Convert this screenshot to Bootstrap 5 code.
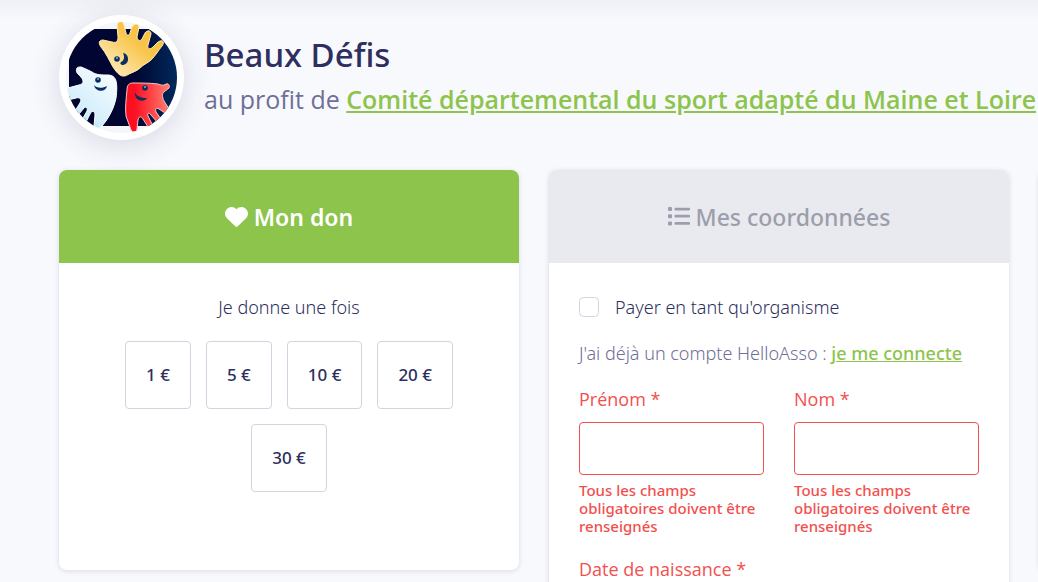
<!DOCTYPE html>
<html lang="fr">
<head>
<meta charset="utf-8">
<meta name="viewport" content="width=device-width, initial-scale=1">
<title>Beaux Défis</title>
<link href="https://cdn.jsdelivr.net/npm/bootstrap@5.3.0/dist/css/bootstrap.min.css" rel="stylesheet">
<style>
  :root { --ink: #2e2f5e; --soft: #6f6f97; --leaf: #8cc44c; --alert: #f2504f; --line: #d1d5e1; }
  body { font: 300 18px/24px "Noto Sans", sans-serif; color: var(--ink); background: #f8f9fd; }
  .page { padding: 15px 29px 0 59px; background: linear-gradient(#eff0f5, #f8f9fd 20px); }
  .masthead { gap: 20px; margin-bottom: 30px; }
  .logo-disc { width: 125px; height: 125px; padding: 7px; background: #fff; box-shadow: 0 5px 30px rgba(46, 47, 94, .16); }
  h1 { font-size: 33px; line-height: 48px; font-weight: 500; }
  .cause { font: 400 25px/40px "Open Sans", sans-serif; color: var(--soft); white-space: nowrap; }
  .leaf-link { color: var(--leaf); font-weight: 500; }
  .cause .leaf-link { font-weight: 600; }
  .leaf-link:hover { color: #6fa634; }
  .steps { --bs-gutter-x: 30px; }
  .step { border: 0; border-radius: 8px; box-shadow: 0 1px 5px rgba(46, 47, 94, .15); }
  .step-head { height: 93px; gap: 6px; border-radius: 8px 8px 0 0; background: #e9eaef; color: #9c9eac; font-size: 23px; line-height: 32px; font-weight: 500; }
  .step-head.current { background: var(--leaf); color: #fff; font-weight: 600; }
  .step-body { padding: 32px 30px; }
  .gift { min-height: 307px; }
  .line-gap { margin-bottom: 22px; }
  .amounts { gap: 15px; padding: 0 28px; }
  .amount { --bs-btn-padding-x: 20px; --bs-btn-padding-y: 21px; --bs-btn-font-size: 17px; --bs-btn-line-height: 24px; --bs-btn-font-weight: 500; --bs-btn-border-radius: 4px; --bs-btn-border-color: var(--line); --bs-btn-color: var(--ink); --bs-btn-hover-border-color: var(--leaf); --bs-btn-hover-color: var(--leaf); }
  .tick { width: 20px; height: 20px; margin: 0; border-color: var(--line); border-radius: 4px; }
  .account { color: var(--soft); }
  .field { color: var(--alert); }
  .field label { font: 400 18px/24px "Open Sans", sans-serif; margin-bottom: 11px; }
  .field .form-control { height: 53px; border-color: var(--alert); border-radius: 4px; }
  .hint { font-size: 15px; line-height: 18px; font-weight: 500; margin-top: 6px; }
</style>
</head>
<body>
<main class="page vh-100 overflow-hidden">
  <header class="masthead d-flex">
    <div class="logo-disc rounded-circle flex-shrink-0">
      <svg class="d-block w-100" viewBox="0 0 111 111" role="img" aria-label="Logo">
        <defs>
          <clipPath id="disc"><circle cx="55.500" cy="55.500" r="55.500"/></clipPath>
          <linearGradient id="night"><stop offset=".6" stop-color="#000531"/><stop offset="1" stop-color="#00295a"/></linearGradient>
          <linearGradient id="gold" y1="1" x2="1" y2="0"><stop stop-color="#fff3d5"/><stop offset=".6" stop-color="#f8c54a"/><stop offset="1" stop-color="#f9bd35"/></linearGradient>
          <linearGradient id="ice" x1="0" y1="1" x2=".7" y2="0"><stop stop-color="#80d4f4"/><stop offset=".4" stop-color="#d4effb"/><stop offset="1" stop-color="#f4fbff"/></linearGradient>
          <linearGradient id="fire"><stop offset=".2" stop-color="#fb1022"/><stop offset=".9" stop-color="#ff766b"/></linearGradient>
        </defs>
        <g clip-path="url(#disc)">
          <path fill="#f4f6fa" d="M0 0h111v111H0z"/>
          <path fill="url(#night)" d="M3 7h108v97H3z"/>
          <g stroke-linejoin="round">
            <path stroke="#ffe9b5" fill="url(#gold)" d="M37 18c-4 0-5 3-2 7 5 6 8 13 12 20 2 3 4 6 7 8s6 1 9-1c4-2 8-3 11-6 4-4 8-5 11-8 5-5 7-9 11-14 3-4 1-7-4-4l-5 5c-3 3-6 2-5-2l3-11c0-4-4-4-6-1l-3 6c-2 3-5 1-5-2l2-10c0-4-5-4-7 0l-2 6c-1 3-3 3-4 0l-2-8c-1-5-6-5-7 1l1 11c0 5-2 6-6 5z"/>
            <path stroke="#fff" fill="url(#ice)" d="M11 46c-2 4 1 6 4 9 3 4 3 7-2 8L-2 67v12l12-3c4-1 6 1 4 5l-5 8c-2 4 1 6 4 3l5-6c2-2 4 0 3 3l-5 9c-2 4 2 5 4 2l4-8c2-4 5-3 5 1l-1 11c1 4 5 3 8 0 7-8 12-18 14-28 1-8 1-13 0-17-1-4-4-6-8-6-6 0-12 0-16-3-4-2-8-4-11-5-2 0-3 0-4 1z"/>
            <path stroke="#ffc2c5" fill="url(#fire)" d="M67 61c-4 0-6 2-6 7-1 10-2 18-1 26l5 14c2 3 6 2 6-1l1-9c1-4 3-4 5-1l5 8c3 2 6 0 4-3l-4-8c-1-3 1-4 3-1l7 8c3 2 5-1 3-4l-5-7c-1-3 0-5 3-3l9 6c3 1 4-1 3-3l-7-11c-2-4-2-8 0-9l5-4c1-2 0-5-3-4-2 2-5 1-8 0-8-1-17-1-25-1z"/>
          </g>
          <g fill="#0b2f61">
            <circle cx="51" cy="37" r="2.800"/><path d="M57 31c7 1 7 12-1 12-2-1-2-2-1-3 3-1 4-5 2-9z"/>
            <circle cx="32" cy="58" r="2.800"/><path d="M28 63c2 3 8 4 13 1-1 7-12 6-13-1z"/>
            <circle cx="79" cy="66" r="2.800"/><path d="M69 70c1 4 6 6 12 6-3 5-13 3-12-6z"/>
          </g>
          <g fill="#77afd4"><circle cx="51" cy="36" r="1"/><circle cx="32" cy="57" r="1"/><circle cx="79" cy="65" r="1"/></g>
        </g>
      </svg>
    </div>
    <div class="pt-3">
      <h1 class="mb-0">Beaux Défis</h1>
      <p class="cause mb-0">au profit de <a class="leaf-link" href="#">Comité départemental du sport adapté du Maine et Loire</a></p>
    </div>
  </header>

  <div class="row row-cols-2 flex-nowrap steps align-items-start">
    <section class="col">
      <div class="card step">
        <h2 class="step-head current d-flex align-items-center justify-content-center mb-0">
          <svg width="23" height="20" viewBox="0 0 22 19" fill="currentColor" aria-hidden="true"><path d="M11 2C8.500-.7 4.600-.6 2.200 1.500-.6 4-.7 8 1.800 10.600l8 7.800c.7.700 1.700.7 2.400 0l8-7.800C22.700 8 22.600 4 19.800 1.500 17.400-.6 13.500-.7 11 2z"/></svg>
          <span>Mon don</span>
        </h2>
        <div class="step-body gift text-center">
          <p class="line-gap">Je donne une fois</p>
          <div class="amounts d-flex flex-wrap justify-content-center">
            <button type="button" class="btn amount">1 €</button>
            <button type="button" class="btn amount">5 €</button>
            <button type="button" class="btn amount">10 €</button>
            <button type="button" class="btn amount">20 €</button>
            <button type="button" class="btn amount">30 €</button>
          </div>
        </div>
      </div>
    </section>

    <section class="col">
      <div class="card step">
        <h2 class="step-head d-flex align-items-center justify-content-center mb-0">
          <svg width="22" height="19" viewBox="0 0 22 19" fill="currentColor" aria-hidden="true"><rect width="4" height="4" rx="1"/><rect y="7.200" width="4" height="4" rx="1"/><rect y="14.500" width="4" height="4" rx="1"/><rect x="6.500" y=".7" width="15.500" height="2.800" rx="1"/><rect x="6.500" y="7.800" width="15.500" height="2.800" rx="1"/><rect x="6.500" y="15" width="15.500" height="2.800" rx="1"/></svg>
          <span>Mes coordonnées</span>
        </h2>
        <form class="step-body">
          <div class="d-flex align-items-center line-gap">
            <input class="form-check-input tick" type="checkbox" id="org">
            <label class="ps-3" for="org">Payer en tant qu'organisme</label>
          </div>
          <p class="account line-gap">J'ai déjà un compte HelloAsso : <a class="leaf-link" href="#">je me connecte</a></p>
          <div class="row row-cols-2 steps line-gap">
            <div class="col field">
              <label class="d-block" for="first">Prénom *</label>
              <input class="form-control" type="text" id="first" aria-describedby="first-hint">
              <div class="hint" id="first-hint">Tous les champs obligatoires doivent être renseignés</div>
            </div>
            <div class="col field">
              <label class="d-block" for="last">Nom *</label>
              <input class="form-control" type="text" id="last" aria-describedby="last-hint">
              <div class="hint" id="last-hint">Tous les champs obligatoires doivent être renseignés</div>
            </div>
          </div>
          <div class="field">
            <label class="d-block" for="birth">Date de naissance *</label>
            <input class="form-control" type="text" id="birth">
          </div>
        </form>
      </div>
    </section>

    <section class="col">
      <div class="card step">
        <div class="step-head"></div>
        <div class="step-body gift"></div>
      </div>
    </section>
  </div>
</main>
<script src="https://cdn.jsdelivr.net/npm/bootstrap@5.3.0/dist/js/bootstrap.bundle.min.js"></script>
</body>
</html>
